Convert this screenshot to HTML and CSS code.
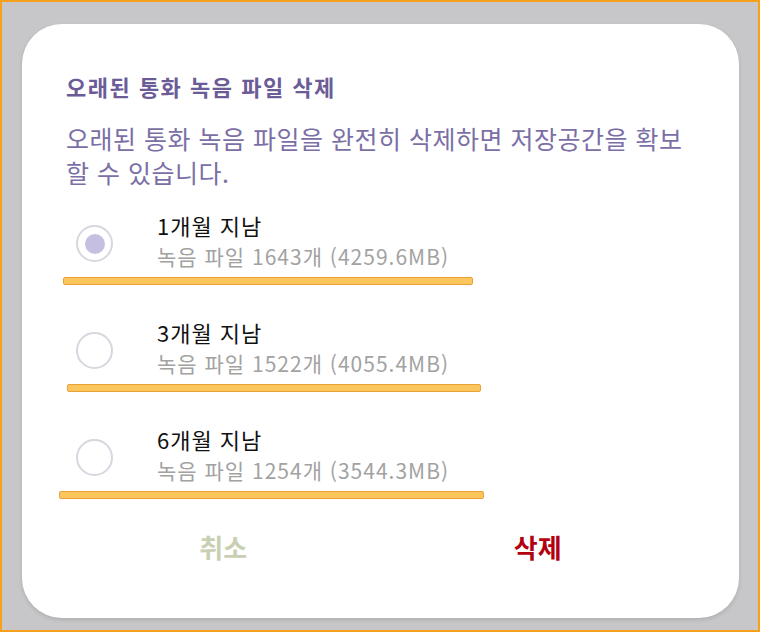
FILE: index.html
```html
<!DOCTYPE html>
<html lang="ko">
<head>
  <meta charset="UTF-8" />
  <meta name="viewport" content="width=device-width, initial-scale=1.0" />
  <title>오래된 통화 녹음 파일 삭제</title>
  <link rel="stylesheet" href="styles.css">
</head>
<body>
  <div class="dialog">
    <h1 class="dialog-title">오래된 통화 녹음 파일 삭제</h1>
    <p class="dialog-text">오래된 통화 녹음 파일을 완전히 삭제하면 저장공간을 확보할 수 있습니다.</p>

    <div class="options">
      <label class="option">
        <span class="radio checked"></span>
        <span class="option-text">
          <span class="option-name">1개월 지남</span>
          <span class="option-size">녹음 파일 1643개 (4259.6MB)</span>
        </span>
      </label>
      <div class="mark mark-1"></div>

      <label class="option">
        <span class="radio"></span>
        <span class="option-text">
          <span class="option-name">3개월 지남</span>
          <span class="option-size">녹음 파일 1522개 (4055.4MB)</span>
        </span>
      </label>
      <div class="mark mark-2"></div>

      <label class="option">
        <span class="radio"></span>
        <span class="option-text">
          <span class="option-name">6개월 지남</span>
          <span class="option-size">녹음 파일 1254개 (3544.3MB)</span>
        </span>
      </label>
      <div class="mark mark-3"></div>
    </div>

    <div class="buttons">
      <button class="btn btn-cancel">취소</button>
      <button class="btn btn-delete">삭제</button>
    </div>
  </div>
</body>
</html>
```

FILE: styles.css
```css
html {
  height: 100%;
}

body {
  margin: 0;
  height: 100%;
  box-sizing: border-box;
  border: 2px solid #f6a01c;
  background-color: #c7c7c9;
  padding: 22px 19px 0 20px;
  font-family: "Noto Sans CJK KR", "Noto Sans", sans-serif;
}

.dialog {
  height: 594px;
  box-sizing: border-box;
  background-color: #fff;
  border-radius: 40px;
  padding: 47px 44px 0 44px;
  box-shadow: 0 2px 4px rgba(0,0,0,0.12);
}

.dialog-title {
  margin: 0;
  font-size: 22px;
  line-height: 30px;
  font-weight: bold;
  letter-spacing: 1.5px;
  color: #6b5c98;
}

.dialog-text {
  margin: 20px 0 0;
  font-size: 25px;
  line-height: 34px;
  letter-spacing: 0.5px;
  color: #7b6fa6;
}

.options {
  margin-top: 20px;
}

.option {
  display: flex;
  align-items: flex-start;
  cursor: pointer;
}

.radio {
  width: 37px;
  height: 37px;
  box-sizing: border-box;
  border: 2px solid #d8d6de;
  border-radius: 50%;
  margin: 16px 44px 0 10px;
  display: flex;
  justify-content: center;
  align-items: center;
}

.radio.checked::after {
  content: "";
  width: 20px;
  height: 20px;
  border-radius: 50%;
  background-color: #c5c0e1;
}

.option-text {
  display: flex;
  flex-direction: column;
}

.option-name {
  font-size: 22px;
  line-height: 32px;
  letter-spacing: 1px;
  color: #111;
}

.option-size {
  font-size: 21px;
  line-height: 31px;
  color: #a2a2a2;
  letter-spacing: 1px;
}

.mark {
  height: 8px;
  box-sizing: border-box;
  margin: 5px 0 31px;
  background-color: #fbc65e;
  border: 1px solid #eba235;
  border-radius: 2px;
}

.mark-1 {
  margin-left: -3px;
  width: 410px;
}

.mark-2 {
  margin-left: 1px;
  width: 414px;
}

.mark-3 {
  margin-left: -7px;
  width: 425px;
}

.buttons {
  display: grid;
  grid-template-columns: 1fr 1fr;
}

.btn {
  background: none;
  border: none;
  padding: 0;
  font-family: inherit;
  font-size: 26px;
  line-height: 34px;
  font-weight: bold;
  cursor: pointer;
}

.btn-cancel {
  color: #c8d0b3;
}

.btn-delete {
  color: #b3000f;
}
```
